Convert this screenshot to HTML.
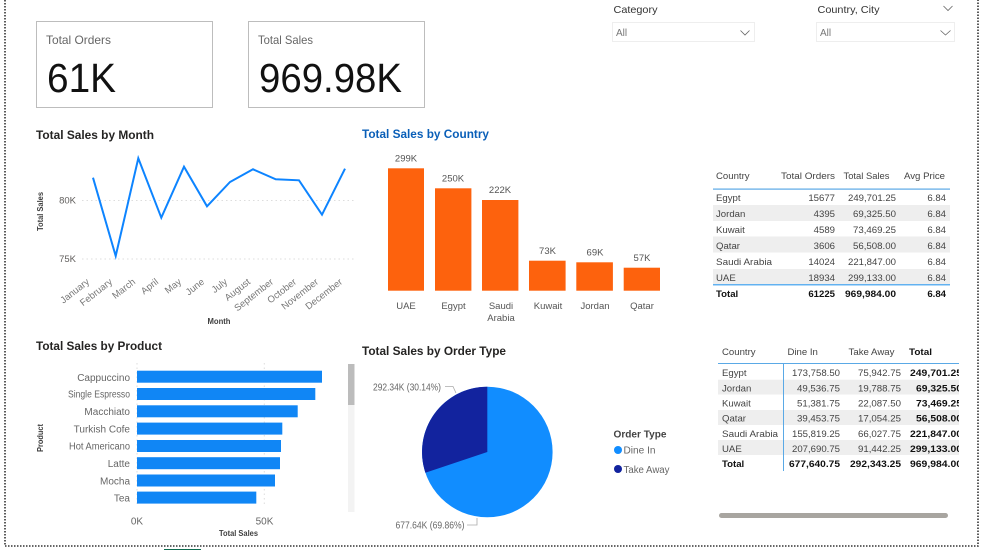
<!DOCTYPE html>
<html><head><meta charset="utf-8"><title>Dashboard</title>
<style>
html,body{margin:0;padding:0;background:#fff;width:1000px;height:550px;overflow:hidden}
svg{display:block;font-family:"Liberation Sans",sans-serif}
#r{filter:blur(.3px)}
.t{font-size:12px;font-weight:bold;fill:#252423}
.ax{font-size:9.5px;fill:#605e5c}
.at{font-size:8px;font-weight:bold;fill:#404040}
.c{font-size:9.6px;fill:#444}
.b{font-size:9.6px;font-weight:bold;fill:#111}
.e{text-anchor:end}
.m{text-anchor:middle}
</style></head><body>
<svg width="1000" height="550" viewBox="0 0 1000 550" xmlns="http://www.w3.org/2000/svg">
<g id="r">
<!-- page border -->
<g fill="none" stroke="#333" stroke-width="1.6" stroke-dasharray="1.5 1.5">
<path d="M5 0V546H978V0"/>
</g>
<rect x="164" y="549" width="37" height="1" fill="#0f6b4f"/>

<!-- cards -->
<rect x="36.5" y="21.5" width="176" height="86" fill="#fff" stroke="#bdbdbd"/>
<rect x="248.5" y="21.5" width="176" height="86" fill="#fff" stroke="#bdbdbd"/>
<text x="46" y="44" font-size="12" fill="#666" textLength="65" lengthAdjust="spacingAndGlyphs">Total Orders</text>
<text x="258" y="44" font-size="12" fill="#666" textLength="55" lengthAdjust="spacingAndGlyphs">Total Sales</text>
<text x="47" y="92" font-size="41" fill="#111" textLength="69" lengthAdjust="spacingAndGlyphs">61K</text>
<text x="259" y="92" font-size="41" fill="#111" textLength="143" lengthAdjust="spacingAndGlyphs">969.98K</text>

<!-- slicers -->
<text x="613.5" y="13" font-size="10.5" fill="#333" textLength="44" lengthAdjust="spacingAndGlyphs">Category</text>
<text x="817.5" y="13" font-size="10.5" fill="#333" textLength="62" lengthAdjust="spacingAndGlyphs">Country, City</text>
<rect x="612.5" y="22.5" width="142" height="19" fill="#fff" stroke="#eee"/>
<rect x="816.5" y="22.5" width="138" height="19" fill="#fff" stroke="#eee"/>
<text x="616" y="36" font-size="10" fill="#777">All</text>
<text x="820" y="36" font-size="10" fill="#777">All</text>
<g fill="none" stroke="#666" stroke-width=".8">
<path d="M740.5 30.5l4.5 4.5 4.5-4.5"/>
<path d="M940.5 30.5l5 4.5 5-4.5"/>
<path d="M943.5 6l4.5 4.5 4.5-4.5"/>
</g>

<!-- titles -->
<text class="t" x="36" y="139" textLength="118" lengthAdjust="spacingAndGlyphs">Total Sales by Month</text>
<text class="t" x="362" y="138" style="fill:#0a5fb8" textLength="127" lengthAdjust="spacingAndGlyphs">Total Sales by Country</text>
<text class="t" x="36" y="350" textLength="126" lengthAdjust="spacingAndGlyphs">Total Sales by Product</text>
<text class="t" x="362" y="355" textLength="144" lengthAdjust="spacingAndGlyphs">Total Sales by Order Type</text>

<!-- line chart -->
<g stroke="#ddd" stroke-width="1" stroke-dasharray="1.5 3">
<path d="M82 200.5H355"/><path d="M82 259H355"/>
</g>
<text class="ax e" x="76" y="203.5">80K</text>
<text class="ax e" x="76" y="262">75K</text>
<text class="at m" transform="translate(43 211.5) rotate(-90)" textLength="39" lengthAdjust="spacingAndGlyphs">Total Sales</text>
<path d="M93 177.7L115.7 256 138.3 158.3 161.3 217.7 184 166.7 207 206.3 230 182 253 169.3 275.7 179.3 299 180.3 322 214.7 345 168.7" fill="none" stroke="#0d84ff" stroke-width="2"/>
<g style="font-size:9.5px;fill:#777">
<text class="e" transform="translate(90 283) rotate(-38)">January</text>
<text class="e" transform="translate(113 283) rotate(-38)">February</text>
<text class="e" transform="translate(136 283) rotate(-38)">March</text>
<text class="e" transform="translate(159 283) rotate(-38)">April</text>
<text class="e" transform="translate(182 283) rotate(-38)">May</text>
<text class="e" transform="translate(205 283) rotate(-38)">June</text>
<text class="e" transform="translate(228 283) rotate(-38)">July</text>
<text class="e" transform="translate(251 283) rotate(-38)">August</text>
<text class="e" transform="translate(274 283) rotate(-38)">September</text>
<text class="e" transform="translate(297 283) rotate(-38)">October</text>
<text class="e" transform="translate(319 283) rotate(-38)">November</text>
<text class="e" transform="translate(343 283) rotate(-38)">December</text>
</g>
<text class="at m" x="219" y="324" textLength="23" lengthAdjust="spacingAndGlyphs">Month</text>

<!-- country bars -->
<g fill="#fd620d">
<rect x="388" y="168.3" width="36" height="122.4"/>
<rect x="435" y="188.3" width="36.4" height="102.4"/>
<rect x="482" y="200" width="36.4" height="90.7"/>
<rect x="529" y="260.7" width="36.6" height="30"/>
<rect x="576.3" y="262.3" width="36.6" height="28.4"/>
<rect x="623.7" y="267.7" width="36.3" height="23"/>
</g>
<g style="font-size:9.5px;fill:#555;text-anchor:middle">
<text x="406" y="161.5">299K</text>
<text x="453" y="181.5">250K</text>
<text x="500" y="193">222K</text>
<text x="547.5" y="254">73K</text>
<text x="595" y="255.5">69K</text>
<text x="642" y="261">57K</text>
<text x="406" y="309">UAE</text>
<text x="453.5" y="309">Egypt</text>
<text x="501" y="309">Saudi</text>
<text x="501" y="321">Arabia</text>
<text x="548" y="309">Kuwait</text>
<text x="595" y="309">Jordan</text>
<text x="642" y="309">Qatar</text>
</g>

<!-- table 1 -->
<rect x="713" y="205" width="237" height="16" fill="#eeeeee"/>
<rect x="713" y="236.5" width="237" height="16" fill="#eeeeee"/>
<rect x="713" y="269" width="237" height="15.5" fill="#eeeeee"/>
<rect x="713" y="188.5" width="237" height="1.2" fill="#5aa9e6"/>
<rect x="713" y="284.2" width="237" height="1.2" fill="#3fa2f0"/>
<g>
<text class="c" x="716" y="179">Country</text>
<text class="c e" x="835" y="179" textLength="54" lengthAdjust="spacingAndGlyphs">Total Orders</text>
<text class="c e" x="889.5" y="179" textLength="46" lengthAdjust="spacingAndGlyphs">Total Sales</text>
<text class="c e" x="945" y="179" textLength="41" lengthAdjust="spacingAndGlyphs">Avg Price</text>

<text class="c" x="716" y="201">Egypt</text><text class="c e" x="835" y="201">15677</text><text class="c e" x="896" y="201" textLength="48" lengthAdjust="spacingAndGlyphs">249,701.25</text><text class="c e" x="946" y="201">6.84</text>
<text class="c" x="716" y="217">Jordan</text><text class="c e" x="835" y="217">4395</text><text class="c e" x="896" y="217" textLength="43" lengthAdjust="spacingAndGlyphs">69,325.50</text><text class="c e" x="946" y="217">6.84</text>
<text class="c" x="716" y="233">Kuwait</text><text class="c e" x="835" y="233">4589</text><text class="c e" x="896" y="233" textLength="43" lengthAdjust="spacingAndGlyphs">73,469.25</text><text class="c e" x="946" y="233">6.84</text>
<text class="c" x="716" y="249">Qatar</text><text class="c e" x="835" y="249">3606</text><text class="c e" x="896" y="249" textLength="43" lengthAdjust="spacingAndGlyphs">56,508.00</text><text class="c e" x="946" y="249">6.84</text>
<text class="c" x="716" y="265" textLength="56" lengthAdjust="spacingAndGlyphs">Saudi Arabia</text><text class="c e" x="835" y="265">14024</text><text class="c e" x="896" y="265" textLength="48" lengthAdjust="spacingAndGlyphs">221,847.00</text><text class="c e" x="946" y="265">6.84</text>
<text class="c" x="716" y="281">UAE</text><text class="c e" x="835" y="281">18934</text><text class="c e" x="896" y="281" textLength="48" lengthAdjust="spacingAndGlyphs">299,133.00</text><text class="c e" x="946" y="281">6.84</text>
<text class="b" x="716" y="297">Total</text><text class="b e" x="835" y="297">61225</text><text class="b e" x="896" y="297" textLength="51" lengthAdjust="spacingAndGlyphs">969,984.00</text><text class="b e" x="946" y="297">6.84</text>
</g>

<!-- product bars -->
<g stroke="#ddd" stroke-width="1" stroke-dasharray="1.5 3"><path d="M137 363V506"/><path d="M264.3 363V506"/></g>
<g fill="#1086f5">
<rect x="137" y="370.7" width="185" height="12"/>
<rect x="137" y="388" width="178.3" height="12"/>
<rect x="137" y="405.3" width="160.7" height="12"/>
<rect x="137" y="422.6" width="145.3" height="12"/>
<rect x="137" y="440" width="144" height="12"/>
<rect x="137" y="457.2" width="143" height="12"/>
<rect x="137" y="474.5" width="138" height="12"/>
<rect x="137" y="491.6" width="119.3" height="12"/>
</g>
<g style="font-size:10px;fill:#666;text-anchor:end">
<text x="130" y="381">Cappuccino</text>
<text x="130" y="397.5" textLength="62" lengthAdjust="spacingAndGlyphs">Single Espresso</text>
<text x="130" y="415">Macchiato</text>
<text x="130" y="432.5">Turkish Cofe</text>
<text x="130" y="449.5" textLength="61" lengthAdjust="spacingAndGlyphs">Hot Americano</text>
<text x="130" y="467">Latte</text>
<text x="130" y="484.5">Mocha</text>
<text x="130" y="501.5">Tea</text>
<text x="137" y="524.5" style="text-anchor:middle">0K</text>
<text x="264.5" y="524.5" style="text-anchor:middle">50K</text>
</g>
<text class="at m" x="238.5" y="536" textLength="39" lengthAdjust="spacingAndGlyphs">Total Sales</text>
<text class="at m" transform="translate(43 438) rotate(-90)" textLength="28" lengthAdjust="spacingAndGlyphs">Product</text>
<rect x="348" y="364" width="6.5" height="148" fill="#f3f3f3"/>
<rect x="348" y="364" width="6.5" height="41" fill="#bcbcbc"/>

<!-- pie -->
<circle cx="487.3" cy="452" r="65.3" fill="#118dff"/>
<path d="M487.3 452V386.7A65.3 65.3 0 0 0 425.4 472.7Z" fill="#12239e"/>
<path d="M445 386.5h8l3 6.5M467 525h10v-7" fill="none" stroke="#aaa" stroke-width=".8"/>
<text x="373" y="390.5" font-size="10" fill="#666" textLength="68" lengthAdjust="spacingAndGlyphs">292.34K (30.14%)</text>
<text x="395.5" y="528.5" font-size="10" fill="#666" textLength="69" lengthAdjust="spacingAndGlyphs">677.64K (69.86%)</text>
<text x="613.5" y="437.5" font-size="10" font-weight="bold" fill="#444" textLength="53" lengthAdjust="spacingAndGlyphs">Order Type</text>
<circle cx="618" cy="450" r="4" fill="#118dff"/>
<circle cx="618" cy="469" r="4" fill="#12239e"/>
<text x="623.5" y="453.5" font-size="10" fill="#666" textLength="32" lengthAdjust="spacingAndGlyphs">Dine In</text>
<text x="623.5" y="473" font-size="10" fill="#666" textLength="46" lengthAdjust="spacingAndGlyphs">Take Away</text>

<!-- table 2 -->
<defs><clipPath id="cl"><rect x="700" y="340" width="259" height="140"/></clipPath></defs>
<g clip-path="url(#cl)">
<rect x="718" y="379.7" width="241" height="14.8" fill="#eeeeee"/>
<rect x="718" y="410" width="241" height="15" fill="#eeeeee"/>
<rect x="718" y="440" width="241" height="15" fill="#eeeeee"/>
<rect x="718" y="363" width="241" height="1" fill="#5aa9e6"/>
<rect x="783" y="363" width="1" height="108" fill="#5aa9e6"/>
<text class="c" x="722" y="355">Country</text>
<text class="c" x="787.5" y="355">Dine In</text>
<text class="c" x="848.5" y="355" textLength="46" lengthAdjust="spacingAndGlyphs">Take Away</text>
<text class="b" x="909" y="355" textLength="23" lengthAdjust="spacingAndGlyphs">Total</text>

<text class="c" x="722" y="376">Egypt</text><text class="c e" x="840" y="376" textLength="48" lengthAdjust="spacingAndGlyphs">173,758.50</text><text class="c e" x="901" y="376" textLength="43" lengthAdjust="spacingAndGlyphs">75,942.75</text><text class="b" x="910" y="376" textLength="52" lengthAdjust="spacingAndGlyphs">249,701.25</text>
<text class="c" x="722" y="391.5">Jordan</text><text class="c e" x="840" y="391.5" textLength="43" lengthAdjust="spacingAndGlyphs">49,536.75</text><text class="c e" x="901" y="391.5" textLength="43" lengthAdjust="spacingAndGlyphs">19,788.75</text><text class="b" x="916" y="391.5" textLength="46" lengthAdjust="spacingAndGlyphs">69,325.50</text>
<text class="c" x="722" y="406.5">Kuwait</text><text class="c e" x="840" y="406.5" textLength="43" lengthAdjust="spacingAndGlyphs">51,381.75</text><text class="c e" x="901" y="406.5" textLength="43" lengthAdjust="spacingAndGlyphs">22,087.50</text><text class="b" x="916" y="406.5" textLength="46" lengthAdjust="spacingAndGlyphs">73,469.25</text>
<text class="c" x="722" y="421.5">Qatar</text><text class="c e" x="840" y="421.5" textLength="43" lengthAdjust="spacingAndGlyphs">39,453.75</text><text class="c e" x="901" y="421.5" textLength="43" lengthAdjust="spacingAndGlyphs">17,054.25</text><text class="b" x="916" y="421.5" textLength="46" lengthAdjust="spacingAndGlyphs">56,508.00</text>
<text class="c" x="722" y="437" textLength="56" lengthAdjust="spacingAndGlyphs">Saudi Arabia</text><text class="c e" x="840" y="437" textLength="48" lengthAdjust="spacingAndGlyphs">155,819.25</text><text class="c e" x="901" y="437" textLength="43" lengthAdjust="spacingAndGlyphs">66,027.75</text><text class="b" x="910" y="437" textLength="52" lengthAdjust="spacingAndGlyphs">221,847.00</text>
<text class="c" x="722" y="452">UAE</text><text class="c e" x="840" y="452" textLength="48" lengthAdjust="spacingAndGlyphs">207,690.75</text><text class="c e" x="901" y="452" textLength="43" lengthAdjust="spacingAndGlyphs">91,442.25</text><text class="b" x="910" y="452" textLength="52" lengthAdjust="spacingAndGlyphs">299,133.00</text>
<text class="b" x="722" y="467">Total</text><text class="b e" x="840" y="467" textLength="51" lengthAdjust="spacingAndGlyphs">677,640.75</text><text class="b e" x="901" y="467" textLength="51" lengthAdjust="spacingAndGlyphs">292,343.25</text><text class="b" x="910" y="467" textLength="52" lengthAdjust="spacingAndGlyphs">969,984.00</text>
</g>
<rect x="719" y="513" width="229" height="5" rx="2.5" fill="#a8a5a0"/>
</g>
</svg>
</body></html>
